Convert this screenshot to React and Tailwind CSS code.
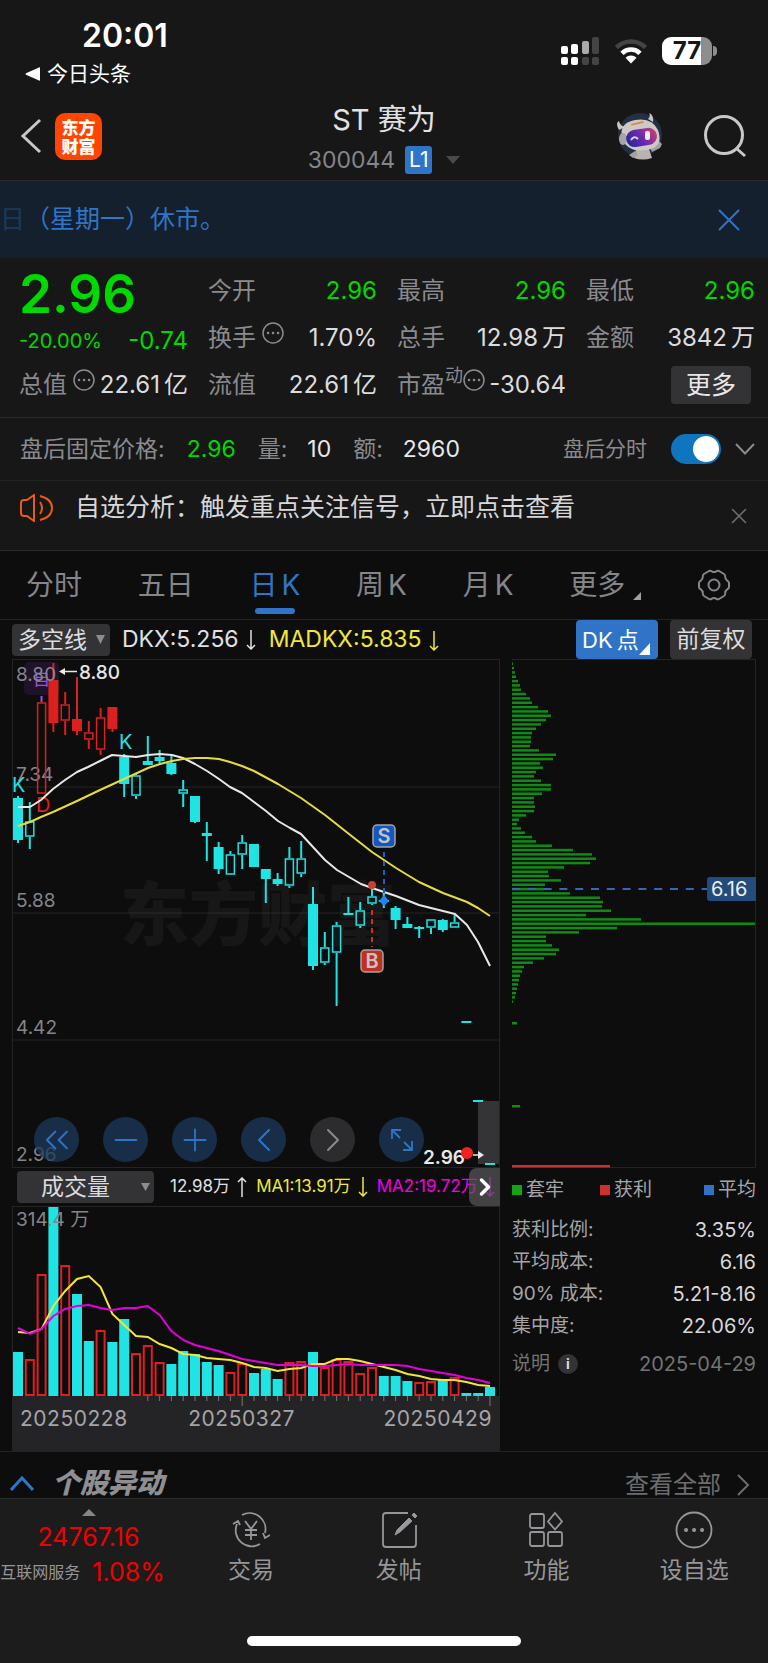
import React, { useState } from 'react';
import { ChevronLeft, ChevronRight, ChevronsLeft, Minus, Plus, X } from 'lucide-react';

const CYAN = '#20e3e3';
const RED = '#dc1f1f';

// [colour, filled, high, bodyTop, bodyBottom, low], one entry per trading day
const CANDLES = [
  [CYAN, 1, 137, 139, 181, 184], [CYAN, 0, 143, 162, 178, 190], [RED, 0, 43, 43, 135, 135],
  [RED, 1, 4, 21, 64, 73], [RED, 0, 33, 45, 62, 76], [RED, 1, 18, 60, 72, 76],
  [RED, 0, 62, 73, 81, 90], [RED, 0, 49, 58, 91, 96], [RED, 1, 48, 48, 70, 73],
  [CYAN, 1, 95, 98, 125, 138], [CYAN, 0, 115, 116, 137, 140], [CYAN, 1, 77, 102, 106, 106],
  [CYAN, 1, 91, 98, 102, 104], [CYAN, 1, 97, 104, 115, 116], [CYAN, 0, 121, 130, 135, 148],
  [CYAN, 1, 137, 137, 163, 164], [CYAN, 1, 163, 174, 177, 202], [CYAN, 1, 183, 188, 210, 215],
  [CYAN, 0, 192, 195, 216, 216], [CYAN, 0, 176, 183, 196, 210], [CYAN, 1, 185, 185, 208, 208],
  [CYAN, 1, 210, 210, 220, 244], [CYAN, 1, 214, 220, 225, 227], [CYAN, 0, 188, 199, 227, 229],
  [CYAN, 0, 182, 199, 215, 218], [CYAN, 1, 228, 245, 307, 311], [CYAN, 0, 273, 288, 304, 306],
  [CYAN, 0, 263, 266, 294, 347], [CYAN, 1, 238, 254, 256, 256], [CYAN, 0, 243, 251, 267, 269],
  [CYAN, 0, 229, 237, 245, 246], [CYAN, 1, 234, 241, 243, 249], [CYAN, 1, 247, 249, 261, 270],
  [CYAN, 1, 258, 265, 269, 269], [CYAN, 1, 267, 268, 270, 279], [CYAN, 0, 260, 260, 269, 275],
  [CYAN, 1, 260, 261, 271, 273], [CYAN, 0, 256, 263, 269, 269], [CYAN, 1, 362, 362, 364, 364],
  [CYAN, 1, 441, 441, 443, 443], [CYAN, 1, 504, 504, 506, 506],
];

const DKX = '6,148 18,148 29,141 41,130 53,121 65,113 76,108 88,102 100,96 112,97 124,98 136,96 148,95 160,96 171,99 183,105 195,112 207,120 218,128 230,134 242,143 254,152 266,162 278,169 289,175 301,188 313,201 325,211 337,218 349,225 360,229 372,233 384,237 407,246 431,252 443,255 455,266 466,283 478,307';
const MADKX = '6,167 18,163 29,158 41,153 65,142 88,131 112,120 136,109 148,105 160,102 171,100 183,99 195,99 207,100 218,103 230,107 242,112 266,125 289,139 313,156 337,175 360,193 384,209 407,223 431,234 455,243 466,249 478,257';

const VOLUMES = [
  [146, 1], [153, 0], [68, 0], [1, 1], [59, 0], [88, 1], [135, 1], [124, 0], [136, 1], [113, 1],
  [147, 0], [139, 0], [156, 0], [158, 1], [145, 1], [148, 1], [156, 1], [159, 1], [166, 0], [157, 0],
  [167, 1], [163, 1], [173, 1], [156, 0], [155, 0], [146, 1], [161, 0], [153, 0], [155, 0], [167, 0],
  [161, 0], [170, 1], [170, 1], [175, 1], [176, 0], [175, 0], [174, 1], [171, 0], [187, 1], [187, 1], [181, 1],
];
const MA1 = [126, 127, 123, 100, 85, 73, 70, 81, 108, 119, 130, 131, 138, 142, 148, 149, 152, 153, 154, 157, 161, 162, 165, 163, 162, 158, 158, 153, 153, 155, 158, 161, 164, 168, 170, 173, 174, 174, 176, 179, 180];
const MA2 = [122, 128, 123, 110, 103, 100, 99, 102, 104, 102, 102, 100, 109, 125, 134, 139, 142, 145, 149, 153, 155, 157, 159, 159, 159, 160, 160, 159, 158, 159, 159, 159, 159, 160, 163, 165, 167, 169, 172, 174, 177];

const CHIPS = [1, 2, 3, 4, 6, 8, 9, 14, 18, 20, 26, 36, 39, 34, 29, 24, 20, 19, 19, 18, 27, 44, 41, 28, 31, 24, 22, 29, 39, 39, 30, 22, 22, 23, 22, 14, 7, 5, 9, 13, 20, 24, 40, 61, 80, 84, 78, 52, 36, 37, 49, 33, 32, 58, 88, 91, 90, 99, 74, 129, 243, 105, 67, 34, 34, 40, 47, 44, 32, 21, 12, 10, 8, 7, 6, 5, 4, 3, 1];

const STEP = 11.8;
const dayX = (i) => 6 + STEP * i;
const toPoints = (values) => values.map((y, i) => `${dayX(i)},${y}`).join(' ');

const StatusBar = () => (
  <div className="flex justify-between pt-[18px] pl-6 pr-[51px] h-[92px]">
    <div>
      <div className="pl-[58px] text-[32px] leading-9 font-semibold text-white">20:01</div>
      <a href="#back" className="flex items-center gap-1.5 text-[21px] leading-10 text-white">
        <svg width="17" height="14" viewBox="0 0 17 14" fill="#fff"><path d="M16 1v12q0 1-1 .6L2 7.8q-1-.8 0-1.6L15 .4q1-.4 1 .6Z" /></svg>
        今日头条
      </a>
    </div>
    <div className="flex items-center gap-[14px] h-[66px]">
      <svg width="40" height="28" viewBox="0 0 40 28" fill="#fff">
        <rect x="1" y="9" width="7" height="8" rx="2" />
        <rect x="11" y="7" width="7" height="10" rx="2" />
        <rect x="22" y="4" width="7" height="13" rx="2" fill="#aaa" />
        <rect x="32" y="0" width="7" height="17" rx="2" fill="#444" />
        <rect x="1" y="20" width="7" height="8" rx="2" />
        <rect x="11" y="20" width="7" height="8" rx="2" />
        <rect x="22" y="20" width="7" height="8" rx="2" fill="#444" />
        <rect x="32" y="20" width="7" height="8" rx="2" fill="#444" />
      </svg>
      <svg width="34" height="26" viewBox="0 0 34 26" fill="none" strokeWidth="4.6">
        <path d="M2.5 9.5a20.500 20.500 0 0 1 29 0" stroke="#444" />
        <path d="M8 15.300a12.700 12.700 0 0 1 18 0" stroke="#fff" />
        <path d="M17 25.500l-5.500-5.700a7.800 7.800 0 0 1 11 0Z" fill="#fff" />
      </svg>
      <div className="flex items-center gap-px">
        <div className="flex w-[50px] h-7 rounded-[9px] overflow-hidden bg-gradient-to-r from-white from-78% to-[#8e8e8e] to-78% text-[#171717] text-[24px] leading-7 font-bold justify-center">77</div>
        <div className="w-1 h-2.5 rounded-r-full bg-[#8e8e8e]" />
      </div>
    </div>
  </div>
);

const Mascot = () => (
  <svg width="48" height="48" viewBox="0 0 48 48">
    <defs>
      <linearGradient id="visor" x1="0" y1="0.6" x2="1" y2="0.300">
        <stop offset="0" stopColor="#2a259c" />
        <stop offset="0.5" stopColor="#6b2bb0" />
        <stop offset="1" stopColor="#c9406b" />
      </linearGradient>
    </defs>
    <circle cx="24" cy="23" r="22" fill="#232f45" />
    <path d="M20 37h13l3 9q-9 3-18 0Z" fill="#b9b3b0" />
    <path d="M19 39l-6 4 4 3 5-3ZM34 36l5-5q1-4 4-2l3 3-2 4-8 4Z" fill="#a5a0a0" />
    <path d="M3 18Q-1 11 3 9q1 5 6 6ZM32 7q3-3 1-6 5 2 4 9Z" fill="#c9c5c3" />
    <path d="M6 25Q3 11 19 8 36 5 42 18q6 17-11 20Q10 41 6 25Z" fill="#cdc9c7" />
    <ellipse cx="7" cy="27" rx="4" ry="6" fill="#a9a4a6" />
    <path d="M15 12l12-3 .5 2-12 2.500Z" fill="#d98a3d" />
    <rect x="10" y="17" width="31" height="17" rx="8.500" transform="rotate(-9 25 25)" fill="url(#visor)" />
    <path d="M15 28q3-5 7-1" fill="none" stroke="#d9d2f5" strokeWidth="2" />
    <rect x="29" y="19" width="5" height="9" rx="2" fill="#eee" />
  </svg>
);

const Header = () => (
  <header className="grid grid-cols-[1fr_auto_1fr] h-[89px] border-b border-[#2b2b2b]">
    <div className="flex items-center gap-3 pl-[19px]">
      <button aria-label="返回">
        <svg width="24" height="36" viewBox="0 0 24 36" fill="none" stroke="#c8c8c8" strokeWidth="3"><path d="M21 2 4 18l17 16" /></svg>
      </button>
      <div className="flex flex-col items-center justify-center size-[47px] rounded-[10px] bg-[#ff4500] text-white text-[17px] leading-[19px] font-black font-['Noto_Sans_CJK_SC',sans-serif]">
        <span>东方</span>
        <span>财富</span>
      </div>
    </div>
    <div className="flex flex-col items-center pt-2">
      <h1 className="text-[29px] leading-10 text-[#e2e2e4]">ST 赛为</h1>
      <div className="flex items-center gap-2.5">
        <span className="text-[23px] leading-10 text-[#85858a]">300044</span>
        <span className="w-[27px] rounded-[3px] bg-[#2f74c6] text-center text-[21px] leading-7 text-white">L1</span>
        <svg className="ml-1" width="14" height="8" viewBox="0 0 14 8" fill="#4a4a4c"><path d="M0 0h14L7 8Z" /></svg>
      </div>
    </div>
    <div className="flex items-center justify-end gap-10 pr-[21px]">
      <Mascot />
      <button aria-label="搜索">
        <svg width="43" height="43" viewBox="0 0 43 43" fill="none" stroke="#c8c8c8" strokeWidth="3"><circle cx="20" cy="20" r="18.500" /><path d="m32 33 9 8" /></svg>
      </button>
    </div>
  </header>
);

const Dots = () => (
  <svg className="shrink-0" width="22" height="22" viewBox="0 0 22 22" fill="none" stroke="#8a8a8f" strokeWidth="1.5">
    <circle cx="11" cy="11" r="10" />
    <path d="M6 11h.1M11 11h.1M16 11h.1" strokeWidth="2.500" strokeLinecap="round" />
  </svg>
);

const Field = ({ label, value, unit, green, sup, dots }) => (
  <div className="flex items-center justify-between h-[47px] text-[24px] whitespace-nowrap">
    <span className="flex items-center text-[#8a8a8f]">
      {label}
      {sup && <sup className="text-[18px]">{sup}</sup>}
      {dots && <span className={sup ? 'pb-2.5' : 'pl-1.5 pb-2.5'}><Dots /></span>}
    </span>
    <span className={green ? 'flex gap-1 text-[#00d800]' : 'flex gap-1 text-[#dcdcde]'}>
      {value}
      {unit && <span>{unit}</span>}
    </span>
  </div>
);

const Quote = () => (
  <section className="grid grid-cols-4 gap-x-5 pl-[19px] pr-[13px] py-[9px] border-b border-[#2b2b2b]">
    <div className="row-span-2 text-[#00d800]">
      <div className="text-[53px] leading-[54px] font-semibold">2.96</div>
      <div className="flex items-center justify-between h-10">
        <span className="text-[20px]">-20.00%</span>
        <span className="text-[24px]">-0.74</span>
      </div>
    </div>
    <Field label="今开" value="2.96" green />
    <Field label="最高" value="2.96" green />
    <Field label="最低" value="2.96" green />
    <Field label="换手" value="1.70%" dots />
    <Field label="总手" value="12.98" unit="万" />
    <Field label="金额" value="3842" unit="万" />
    <Field label="总值" value="22.61" unit="亿" dots />
    <Field label="流值" value="22.61" unit="亿" />
    <Field label="市盈" value="-30.64" sup="动" dots />
    <div className="flex items-center justify-end pr-1">
      <button className="w-20 h-[38px] rounded bg-[#333335] text-[25px] leading-[38px] text-[#e8e8ea]">更多</button>
    </div>
  </section>
);

const AfterHours = () => (
  <section className="flex items-center h-[63px] pl-5 pr-[5px] border-b border-[#232323] text-[23px] text-[#8a8a8f] whitespace-nowrap">
    <span>盘后固定价格:</span>
    <span className="ml-[22px] text-[#00d800]">2.96</span>
    <span className="ml-[22px]">量:</span>
    <span className="ml-5 text-[#e8e8ea]">10</span>
    <span className="ml-[22px]">额:</span>
    <span className="ml-5 text-[#e8e8ea]">2960</span>
    <label htmlFor="after" className="ml-auto text-[21px]">盘后分时</label>
    <input
      id="after"
      type="checkbox"
      role="switch"
      defaultChecked
      className="appearance-none flex items-center justify-end w-[50px] h-[30px] ml-6 px-0.5 rounded-full bg-[#0f75bf] before:size-[26px] before:rounded-full before:bg-white"
    />
    <button aria-label="展开" className="flex justify-center w-9 ml-1.5">
      <svg width="20" height="12" viewBox="0 0 20 12" fill="none" stroke="currentColor" strokeWidth="2"><path d="m1 1 9 9.500L19 1" /></svg>
    </button>
  </section>
);

const Notice = () => (
  <section className="flex items-center h-[70px] pl-5 pr-4 pb-4 border-b border-[#2b2b2b] text-[25px] text-[#d8d8da]">
    <svg width="33" height="28" viewBox="0 0 33 28" fill="none" stroke="#e85c10" strokeWidth="2">
      <path d="M14 1 7 6H4Q1 6 1 9v10q0 3 3 3h3l7 5ZM20 8q4 6 0 12" />
      <path d="M20 2q12 3 12 12T20 26" />
    </svg>
    <span className="ml-[22px]">自选分析：触发重点关注信号，立即点击查看</span>
    <button aria-label="关闭" className="ml-auto pt-4 text-[#6d6d70]"><X size={26} strokeWidth={1.5} /></button>
  </section>
);

const TABS = [['分时'], ['五日'], ['日', 'K'], ['周', 'K'], ['月', 'K']];

const Tabs = () => {
  const [active, setActive] = useState(2);
  return (
    <nav className="flex justify-between h-[69px] pl-[26px] pr-[37px] border-b border-[#242424] text-[28px] text-[#85858a]">
      {TABS.map(([name, suffix], i) => (
        <button key={name} onClick={() => setActive(i)} className={i === active ? 'flex flex-col items-center pt-3 text-[#2f74c6]' : 'flex flex-col items-center pt-3'}>
          <span className="flex gap-1 leading-[45px]">
            {name}
            {suffix && <span>{suffix}</span>}
          </span>
          {i === active && <span className="w-10 h-1.5 rounded-full bg-[#2f74c6]" />}
        </button>
      ))}
      <button className="flex items-start gap-2 pt-3">
        <span className="leading-[45px]">更多</span>
        <svg className="mt-[29px]" width="8" height="8" viewBox="0 0 8 8" fill="#a0a0a4"><path d="M8 0v8H0Z" /></svg>
      </button>
      <button aria-label="设置">
        <svg width="34" height="34" viewBox="0 0 34 34" fill="none" stroke="#85858a" strokeWidth="2" strokeLinejoin="round">
          <path d="M12 3q1.500-.8 2.800.300 2.200 1.400 4.400 0Q20.500 2.200 22 3l5 3q1.400.8 1.200 2.600-.1 2.600 2 4Q32 13.500 32 15v4q0 1.500-1.800 2.400-2.100 1.400-2 4 .2 1.800-1.200 2.600l-5 3q-1.500.8-2.800-.300-2.200-1.400-4.400 0-1.300 1.100-2.800.300l-5-3q-1.400-.8-1.200-2.600.1-2.600-2-4Q2 20.500 2 19v-4q0-1.500 1.800-2.400 2.100-1.400 2-4Q5.600 6.800 7 6Z" />
          <circle cx="17" cy="17" r="5.500" />
        </svg>
      </button>
    </nav>
  );
};

const DownArrow = ({ up }) => (
  <svg className="inline-block ml-1.5" width="12" height="20" viewBox="0 0 12 20" fill="none" stroke="currentColor" strokeWidth="1.5">
    {up ? <path d="M6 20V1M2 5l4-4 4 4" /> : <path d="M6 0v19M2 15l4 4 4-4" />}
  </svg>
);

const IndicatorRow = () => (
  <div className="flex items-center h-[39px] pl-3 pr-4 text-[23px] text-[#e0e0e2] whitespace-nowrap">
    <div className="flex items-center w-[98px] h-8 rounded bg-[#333335]">
      <select aria-label="主图指标" className="appearance-none w-20 pl-1.5 bg-transparent text-[23px] leading-8 text-[#dcdcde]">
        <option>多空线</option>
      </select>
      <svg className="ml-1" width="9" height="9" viewBox="0 0 9 9" fill="#8d8d90"><path d="M0 0h9L4.500 9Z" /></svg>
    </div>
    <span className="ml-3">DKX:5.256</span>
    <DownArrow />
    <span className="ml-3 text-[#efe83a]">MADKX:5.835</span>
    <span className="text-[#efe83a]"><DownArrow /></span>
    <button className="flex items-end ml-auto w-[82px] h-[39px] pl-1.5 pb-1 rounded bg-[#2f74c6] text-[22px] text-white">
      <span className="flex gap-1 leading-[30px]">DK<span>点</span></span>
      <svg width="11" height="12" viewBox="0 0 11 12" fill="#fff"><path d="M11 0v12H0Z" /></svg>
    </button>
    <button className="ml-3 w-[82px] h-[39px] rounded bg-[#333335] text-[23px] text-[#dcdcde]">前复权</button>
  </div>
);

const KLineChart = () => (
  <svg className="block w-full" viewBox="0 0 488 509" fontFamily="Inter, 'Noto Sans CJK SC', sans-serif">
    <path d="M.5 0v509M487.500 0v509M0 .5h488M0 128h488M0 254h488M0 381h488M0 508.500h488" stroke="#242424" fill="none" />
    <text x="108" y="281" fontSize="69" fontWeight="900" fill="#fff" opacity="0.04" fontFamily="'Noto Sans CJK SC', sans-serif">东方财富</text>
    <rect x="12" y="3" width="35" height="33" rx="5" fill="#1f132c" />
    <g fontSize="19" fill="#85858a">
      <text x="4" y="122">7.34</text>
      <text x="4" y="248">5.88</text>
      <text x="4" y="375">4.42</text>
      <text x="4" y="502">2.96</text>
    </g>
    {CANDLES.map(([color, filled, high, top, bottom, low], i) => (
      <g key={i} stroke={color} strokeWidth="2">
        <path d={`M${dayX(i)} ${high}V${top}M${dayX(i)} ${bottom}V${low}`} />
        {filled
          ? <rect x={dayX(i) - 5} y={top} width="10" height={bottom - top} fill={color} stroke="none" />
          : <rect x={dayX(i) - 4} y={top + 1} width="8" height={bottom - top - 2} fill="none" strokeWidth="1.500" />}
      </g>
    ))}
    <path d="M29.500 37v6" stroke="#9b4fe8" strokeWidth="2" />
    <text x="21" y="26" fontSize="17" fill="#9b4fe8">自</text>
    <text x="4" y="22" fontSize="19" fill="#85858a">8.80</text>
    <path d="M52 12.500h13" stroke="#e8e8e8" strokeWidth="1.500" />
    <path d="M47 12.500l6-3.500v7Z" fill="#e8e8e8" />
    <text x="67" y="20" fontSize="19" fontWeight="500" fill="#e4e4e4">8.80</text>
    <g fontSize="20" fill={CYAN}>
      <text x="0" y="133">K</text>
      <text x="107" y="90">K</text>
      <text x="24" y="153" fill={RED}>D</text>
    </g>
    <polyline points={DKX} fill="none" stroke="#e8e8e8" strokeWidth="2" strokeLinejoin="round" />
    <polyline points={MADKX} fill="none" stroke="#e6dc3c" strokeWidth="2" strokeLinejoin="round" />
    <path d="M372 193v42" stroke="#1d5fc4" strokeWidth="2" strokeDasharray="5 4" />
    <path d="M360 251v37" stroke="#c23524" strokeWidth="2" strokeDasharray="5 4" />
    <circle cx="360" cy="226" r="4" fill="#c9402f" />
    <path d="M372 236l5 6-5 5-5-5Z" fill="#1e86f5" />
    <g strokeWidth="1.500" stroke="#a3a3a6">
      <rect x="361" y="166" width="22" height="22" rx="4" fill="#1558bd" />
      <rect x="349" y="291" width="22" height="22" rx="4" fill="#c0301f" />
    </g>
    <g fontSize="20" fontWeight="600" fill="#c4c4c8" textAnchor="middle">
      <text x="372" y="184">S</text>
      <text x="360" y="309">B</text>
    </g>
    <rect x="466" y="442" width="21" height="63" fill="#343436" />
    <path d="M461 442h10M473 505h10" stroke={CYAN} strokeWidth="2" />
    <text x="411" y="505" fontSize="19" fontWeight="600" fill="#e8e8e8">2.96</text>
    <circle cx="455" cy="494" r="6" fill="#f32020" />
    <path d="M461 496h6" stroke="#e8e8e8" strokeWidth="1.500" />
    <path d="M472 496l-6-4v8Z" fill="#e8e8e8" />
  </svg>
);

const CONTROLS = [
  { name: '最左', icon: <ChevronsLeft size={40} strokeWidth={1.2} /> },
  { name: '缩小', icon: <Minus size={36} strokeWidth={1.2} /> },
  { name: '放大', icon: <Plus size={36} strokeWidth={1.2} /> },
  { name: '左移', icon: <ChevronLeft size={40} strokeWidth={1.2} /> },
  { name: '右移', icon: <ChevronRight size={40} strokeWidth={1.2} />, off: true },
  {
    name: '全屏',
    icon: (
      <svg width="24" height="24" viewBox="0 0 24 24" fill="none" stroke="currentColor" strokeWidth="1.800">
        <path d="M2 11V2h9M2 2l8 8M22 13v9h-9M22 22l-8-8" />
      </svg>
    ),
  },
];

const VolumeHeader = () => (
  <div className="flex items-center h-[38px] pl-[5px] text-[17px] text-[#e0e0e2] whitespace-nowrap overflow-hidden">
    <div className="flex items-center shrink-0 w-[137px] h-8 rounded bg-[#333335]">
      <select aria-label="副图指标" className="appearance-none w-[124px] pl-6 bg-transparent text-[23px] leading-8 text-[#dcdcde]">
        <option>成交量</option>
      </select>
      <svg width="9" height="8" viewBox="0 0 9 8" fill="#8d8d90"><path d="M0 0h9L4.500 8Z" /></svg>
    </div>
    <span className="flex items-center ml-4">12.98万<DownArrow up /></span>
    <span className="flex items-center ml-2 text-[#efe83a]">MA1:13.91万<DownArrow /></span>
    <span className="flex items-center ml-2 text-[#f000e8]">MA2:19.72万<DownArrow /></span>
  </div>
);

const VolumeChart = () => (
  <svg className="block w-full" viewBox="0 0 488 200" fontFamily="Inter, 'Noto Sans CJK SC', sans-serif">
    <path d="M.5 190V.5h487V190" stroke="#242424" fill="none" />
    <rect x="0" y="190" width="488" height="10" fill="#242426" />
    {VOLUMES.map(([top, filled], i) => (
      filled
        ? <rect key={i} x={dayX(i) - 5} y={top} width="10" height={190 - top} fill={CYAN} />
        : <rect key={i} x={dayX(i) - 4} y={top + 1} width="8" height={188 - top} fill="none" stroke={RED} strokeWidth="2" />
    ))}
    {VOLUMES.map((_, i) => i > 10 && (
      <path key={i} d={`M${dayX(i)} 190v${i === 19 || i === 40 ? 10 : 5}`} stroke="#77777a" />
    ))}
    <text x="4" y="20" fontSize="19" fill="#85858a">314.4 万</text>
    <polyline points={toPoints(MA1)} fill="none" stroke="#f0e63c" strokeWidth="2" />
    <polyline points={toPoints(MA2)} fill="none" stroke="#e400dc" strokeWidth="2" />
  </svg>
);

const ChipChart = () => (
  <svg className="block w-full" viewBox="0 0 244 509" fontFamily="Inter, sans-serif">
    <path d="M0 .5h243.500V508.500H0" stroke="#242424" fill="none" />
    {CHIPS.map((len, i) => (
      <rect key={i} x="0" y={3.5 + i * 4.333} width={len} height="2.500" fill="#0f8c13" />
    ))}
    <rect x="0" y="363" width="5" height="2.500" fill="#0f8c13" />
    <rect x="0" y="446" width="8" height="2.500" fill="#0f8c13" />
    <rect x="0" y="506" width="98" height="2.500" fill="#cc3030" />
    <path d="M0 230h196" stroke="#2f6cb4" strokeWidth="2" strokeDasharray="8 7.800" />
    <path d="M198 218h46v24h-46q-3 0-3-3v-18q0-3 3-3Z" fill="#234c7c" />
    <text x="199" y="237" fontSize="20" fill="#eee">6.16</text>
  </svg>
);

const COSTS = [
  ['获利比例:', '3.35%'],
  ['平均成本:', '6.16'],
  ['90% 成本:', '5.21-8.16'],
  ['集中度:', '22.06%'],
];

const ChipInfo = () => (
  <div className="text-[19px] text-[#a5a5a8]">
    <div className="flex justify-between h-[46px]">
      <span className="flex items-center gap-1 h-11"><i className="size-2.5 bg-[#12a516]" />套牢</span>
      <span className="flex items-center gap-1 h-11 mr-4"><i className="size-2.5 bg-[#cc3030]" />获利</span>
      <span className="flex items-center gap-1 h-11"><i className="size-2.5 bg-[#2f74c6]" />平均</span>
    </div>
    {COSTS.map(([label, value]) => (
      <div key={label} className="flex justify-between leading-8">
        <span>{label}</span>
        <span className="text-[20px] text-[#d8d8da]">{value}</span>
      </div>
    ))}
    <div className="flex items-center justify-between h-11 text-[#737376]">
      <span className="flex items-center gap-2">
        说明
        <span className="size-5 rounded-full bg-[#333335] text-center text-[14px] leading-5 font-bold text-[#dcdcde]">i</span>
      </span>
      <span className="text-[20px]">2025-04-29</span>
    </div>
  </div>
);

const Charts = () => (
  <main className="grid grid-cols-[minmax(0,2fr)_minmax(0,1fr)] gap-x-3 px-3 border-b border-[#242424]">
    <div>
      <div className="relative">
        <KLineChart />
        <div className="absolute left-[22px] bottom-[6px] flex gap-6">
          {CONTROLS.map(({ name, icon, off }) => (
            <button
              key={name}
              aria-label={name}
              className={off
                ? 'flex items-center justify-center size-[45px] rounded-full bg-[#2c2c2e] text-[#8a8a8e]'
                : 'flex items-center justify-center size-[45px] rounded-full bg-[#1c3a5c]/75 text-[#2f74c6]'}
            >
              {icon}
            </button>
          ))}
        </div>
      </div>
      <div className="relative">
        <VolumeHeader />
        <button aria-label="更多指标" className="absolute right-0 top-0 flex items-center justify-center w-[31px] h-[38px] rounded-l-lg bg-[#5a5a5c]/70 text-white">
          <ChevronRight size={28} strokeWidth={3} />
        </button>
      </div>
      <VolumeChart />
      <div className="flex justify-between h-[45px] px-2 bg-[#242426] text-[21px] leading-[26px] tracking-wide text-[#a5a5a8]">
        <span>20250228</span>
        <span className="mr-7">20250327</span>
        <span>20250429</span>
      </div>
    </div>
    <div>
      <ChipChart />
      <ChipInfo />
    </div>
  </main>
);

const NAV = [
  {
    label: '交易',
    icon: (
      <>
        <path d="M10 4a16 16 0 0 1 23 18M28 33A16 16 0 0 1 5 13" />
        <path d="m1 13 5-3 2 4M38 24l-5 3-2-5M13 10l6 8 6-8M19 18v11M13 19h12M13 24h12" />
      </>
    ),
  },
  {
    label: '发帖',
    icon: (
      <>
        <path d="M28 2H6Q3 2 3 5v28q0 3 3 3h27q3 0 3-3V14" />
        <path d="M15 24l2-5L29 7l3 3-12 11ZM32 4l2-2 3 3-2 2Z" fill="#9a9a9e" strokeWidth="1" />
      </>
    ),
  },
  {
    label: '功能',
    icon: (
      <>
        <rect x="3" y="3" width="14" height="14" rx="2" />
        <rect x="3" y="21" width="14" height="14" rx="2" />
        <rect x="21" y="21" width="14" height="14" rx="2" />
        <path d="m28 2 7 8.500-7 8-7-8Z" />
      </>
    ),
  },
  {
    label: '设自选',
    icon: (
      <>
        <circle cx="19" cy="19" r="17.500" />
        <path d="M11 19h.1M19 19h.1M27 19h.1" strokeWidth="4" strokeLinecap="round" />
      </>
    ),
  },
];

const BottomNav = () => (
  <footer className="pb-[18px] border-t border-[#2b2b2b] bg-[#1c1c1c] text-[#96969a]">
    <nav className="flex h-[137px]">
      <a href="#index" className="flex flex-col items-center w-[177px] pt-2.5 whitespace-nowrap">
        <svg width="14" height="7" viewBox="0 0 14 7" fill="#85858a"><path d="M7 0l7 7H0Z" /></svg>
        <span className="pt-1 text-[25px] leading-[34px] text-[#f00000]">24767.16</span>
        <span className="flex items-center gap-3 pr-3 text-[16px]">
          互联网服务
          <span className="text-[25px] leading-9 text-[#f00000]">1.08%</span>
        </span>
      </a>
      {NAV.map(({ label, icon }) => (
        <a key={label} href={`#${label}`} className="flex flex-1 flex-col items-center pt-3">
          <svg width="38" height="38" viewBox="0 0 38 38" fill="none" stroke="#96969a" strokeWidth="1.800">{icon}</svg>
          <span className="text-[23px] leading-[42px]">{label}</span>
        </a>
      ))}
    </nav>
    <div className="w-[274px] h-2.5 mx-auto rounded-full bg-white" />
  </footer>
);

export default function App() {
  const [banner, setBanner] = useState(true);
  return (
    <div className="bg-[#0d0d0d] font-[Inter,'Noto_Sans_CJK_SC',sans-serif] overflow-hidden">
      <div className="bg-[#171717]">
        <StatusBar />
        <Header />
        {banner && (
          <div className="flex items-center justify-between h-[77px] pr-5 bg-[#15202e] text-[25px] text-[#2f74c6]">
            <span><span className="opacity-30">日</span>（星期一）休市。</span>
            <button aria-label="关闭公告" onClick={() => setBanner(false)}><X size={38} strokeWidth={1.2} /></button>
          </div>
        )}
        <Quote />
        <AfterHours />
        <Notice />
      </div>
      <Tabs />
      <IndicatorRow />
      <Charts />
      <section className="flex items-end justify-between h-[46px] pl-2.5 pr-[18px] text-[#8f8f93]">
        <div className="flex items-center gap-[18px]">
          <svg width="24" height="15" viewBox="0 0 24 15" fill="none" stroke="#2f74c6" strokeWidth="3"><path d="m1 14 11-12 11 12" /></svg>
          <h2 className="text-[28px] leading-[30px] font-black italic">个股异动</h2>
        </div>
        <a href="#all" className="flex items-center gap-4 text-[24px] leading-[26px] text-[#6d6d70]">
          查看全部
          <svg width="13" height="22" viewBox="0 0 13 22" fill="none" stroke="currentColor" strokeWidth="2"><path d="m1 1 10 10L1 21" /></svg>
        </a>
      </section>
      <BottomNav />
    </div>
  );
}
